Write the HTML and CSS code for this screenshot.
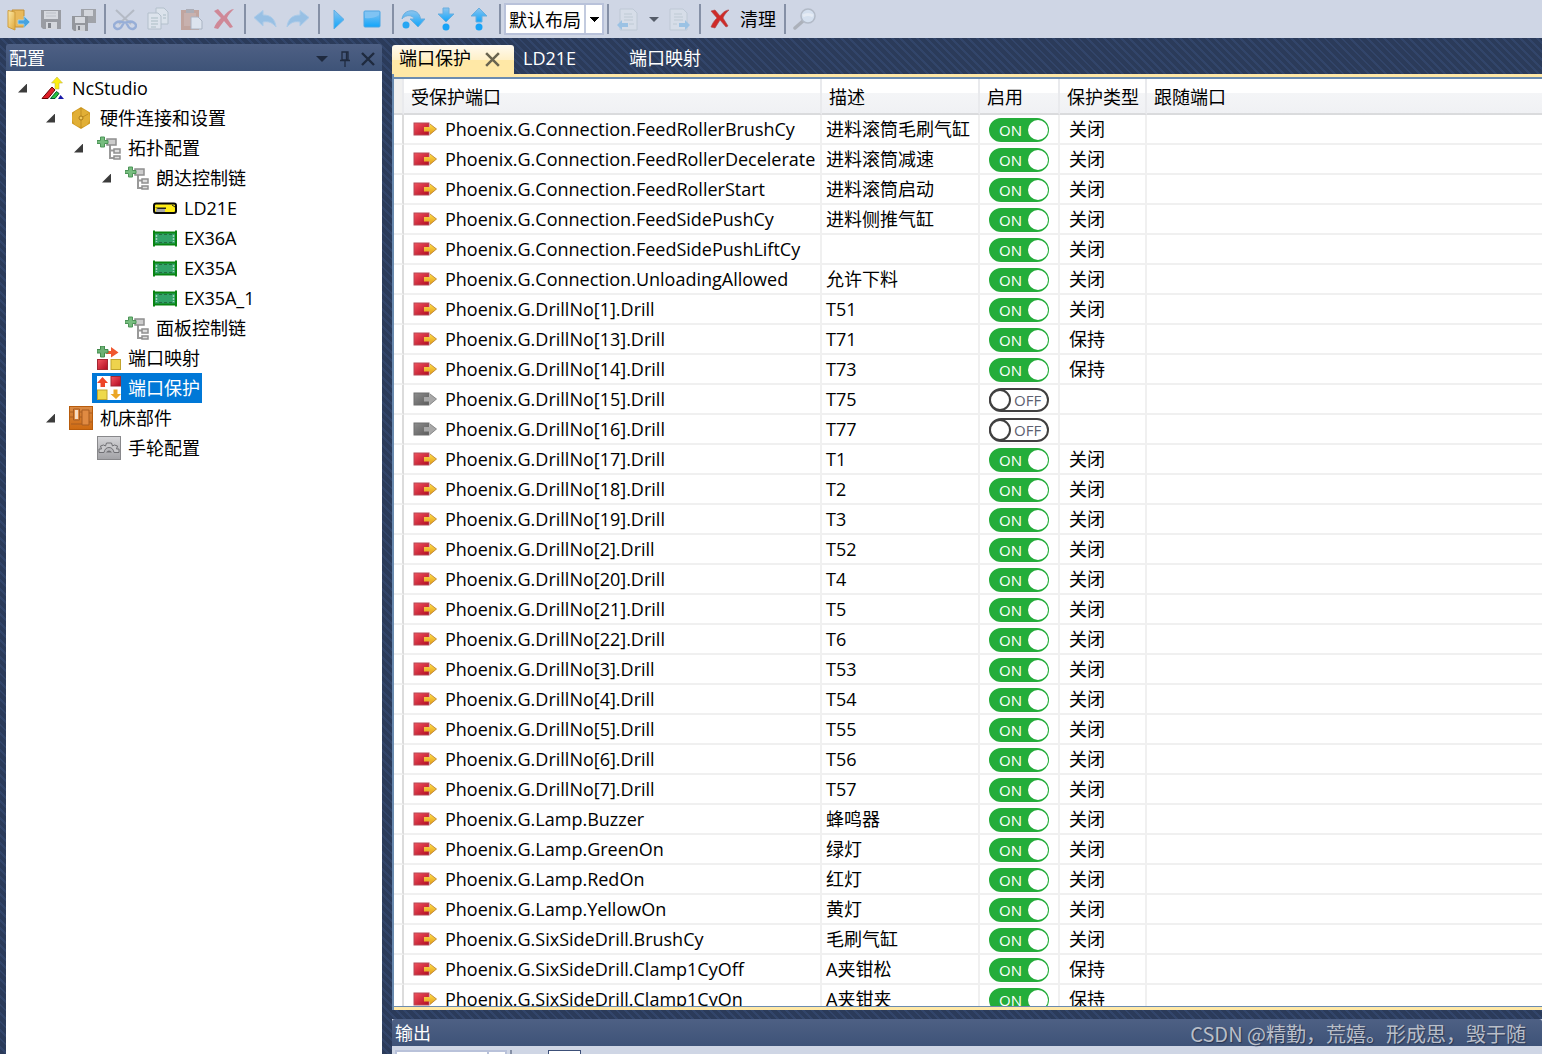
FILE: index.html
```html
<!DOCTYPE html>
<html lang="zh-CN">
<head>
<meta charset="utf-8">
<title>NcStudio</title>
<link rel="stylesheet" href="styles.css">
</head>
<body>
<svg class="defs" aria-hidden="true">
  <defs>
    <linearGradient id="gFolder" x1="0" y1="0" x2="1" y2="1"><stop offset="0" stop-color="#fdeaa8"/><stop offset="1" stop-color="#dfa83a"/></linearGradient>
    <linearGradient id="gBlue" x1="0" y1="0" x2="0" y2="1"><stop offset="0" stop-color="#8cc4ee"/><stop offset="1" stop-color="#0fa5fb"/></linearGradient>
    <linearGradient id="gRed" x1="0" y1="0" x2="1" y2="1"><stop offset="0" stop-color="#f4545f"/><stop offset="1" stop-color="#b00a20"/></linearGradient>
    <linearGradient id="gYellow" x1="0" y1="0" x2="0" y2="1"><stop offset="0" stop-color="#ffe04a"/><stop offset="1" stop-color="#e09a1a"/></linearGradient>
    <linearGradient id="gGray" x1="0" y1="0" x2="1" y2="1"><stop offset="0" stop-color="#8f8f8f"/><stop offset="1" stop-color="#5b5b5b"/></linearGradient>
    <linearGradient id="gSilver" x1="0" y1="0" x2="0" y2="1"><stop offset="0" stop-color="#d5d5d8"/><stop offset="1" stop-color="#a2a2a6"/></linearGradient>
    <linearGradient id="gOrange" x1="0" y1="0" x2="0" y2="1"><stop offset="0" stop-color="#d98a45"/><stop offset="1" stop-color="#cf6a10"/></linearGradient>
  </defs>
  <symbol id="i-open" viewBox="0 0 24 24"><path d="M6 3h12v17H9z" fill="#e9b95a" stroke="#c28f35"/><path d="M2 3.500L9 5v18l-7-3z" fill="url(#gFolder)" stroke="#cf9d3d"/><path d="M12 13h6V9l6 6-6 6v-4h-6z" fill="#46a3e0" stroke="#a9d7f2" stroke-width=".8"/></symbol>
  <symbol id="i-save" viewBox="0 0 24 24"><path d="M2 3h20v19H4l-2-2z" fill="#999ca3"/><path d="M5 4h14v8H5z" fill="#d6d9df"/><path d="M7 6h10M7 9h10" stroke="#bcc0c8"/><path d="M7 15h11v7H7z" fill="#d4d7dd"/><path d="M9 16h3v5H9z" fill="#80848c"/></symbol>
  <symbol id="i-saveall" viewBox="0 0 24 24"><path d="M9 2h15v14H9z" fill="#a0a3a9"/><path d="M12 3h9v6h-9z" fill="#d3d6dc"/><path d="M0 9h16v15H2l-2-2z" fill="#94979d"/><path d="M3 10h10v6H3z" fill="#d6d9df"/><path d="M4 18h9v6H4z" fill="#cdd0d6"/><path d="M6 19h2v4H6z" fill="#7c8088"/></symbol>
  <symbol id="i-cut" viewBox="0 0 24 24"><path d="M3 3l15 14M21 3L6 17" stroke="#a3a9b1" stroke-width="2"/><path d="M1 18.500c0-2 3-4 6-4l4 1-3 5c-3 3-7 1-7-2zM23 18.500c0-2-3-4-6-4l-4 1 3 5c3 3 7 1 7-2z" fill="none" stroke="#7395cf" stroke-width="2.400"/></symbol>
  <symbol id="i-copy" viewBox="0 0 24 24"><path d="M10 1h8l4 4v12H10z" fill="#e4eaf0" stroke="#a2b2bc"/><path d="M2 6h10l3 3v13H2z" fill="#e6ecf2" stroke="#a2b2bc"/><path d="M5 11h7M5 14h7M5 17h7M5 20h5M17 8h3M17 11h3" stroke="#93aeb0"/></symbol>
  <symbol id="i-paste" viewBox="0 0 24 24"><path d="M2 3h18v20H2z" fill="#b98672"/><path d="M5 6h12v13H5z" fill="#c4998a"/><path d="M7 2h8v4H7z" fill="#959297"/><path d="M12 10h7l4 4v8H12z" fill="#e6ecf4" stroke="#939dad"/></symbol>
  <symbol id="i-del" viewBox="0 0 24 24"><path d="M2 4l4-2 6 7c3-4 7-7 10-7-3 3-6 6-7 9l6 9-3 1-6-7-6 8-4-1c2-5 4-7 7-10z" fill="#cf5564"/></symbol>
  <symbol id="i-undo" viewBox="0 0 24 24"><path d="M1 10.500l9-7v4.500c8 0 12 4 13 12-4-5-8-6-13-5v4z" fill="#74b2e4" stroke="#93c4ec"/></symbol>
  <symbol id="i-redo" viewBox="0 0 24 24"><path d="M23 10.500l-9-7v4.500C6 8 2 12 1 20c4-5 8-6 13-5v4z" fill="#74b2e4" stroke="#93c4ec"/></symbol>
  <symbol id="i-play" viewBox="0 0 24 24"><path d="M7 3l10 9.500L7 22z" fill="url(#gBlue)" stroke="#5caee6"/></symbol>
  <symbol id="i-stop" viewBox="0 0 24 24"><rect x="4" y="4" width="16" height="16" rx="1" fill="url(#gBlue)" stroke="#4aa5e4"/><path d="M5 11q8 1 14-3V5H5z" fill="#7fc3f3"/></symbol>
  <symbol id="i-over" viewBox="0 0 24 24"><path d="M1 12C2 5 8 3 13 4c4 1 6 4 6.500 8H24l-7 8-8-8h4c-1-4-8-5-12 0z" fill="url(#gBlue)" stroke="#69aedf"/><circle cx="5" cy="18" r="3.500" fill="#27a6f3"/></symbol>
  <symbol id="i-into" viewBox="0 0 24 24"><path d="M9 1h6v6h5l-8 8-8-8h5z" fill="url(#gBlue)" stroke="#69aedf"/><circle cx="12" cy="20" r="3.500" fill="#18a3f7"/></symbol>
  <symbol id="i-out" viewBox="0 0 24 24"><path d="M9 15h6V9h5l-8-8-8 8h5z" fill="url(#gBlue)" stroke="#69aedf"/><circle cx="12" cy="20" r="3.500" fill="#18a3f7"/></symbol>
  <symbol id="i-prev" viewBox="0 0 24 24"><path d="M4 2h13l4 4v17H4z" fill="#dbe3ea" stroke="#b4c1cd"/><path d="M8 7h8M8 10h9M8 13h9M13 17h5" stroke="#b4c2ca"/><path d="M1 18l5-5v3h6v4H6v3z" fill="#7ab6e4"/></symbol>
  <symbol id="i-next" viewBox="0 0 24 24"><path d="M3 2h13l4 4v17H3z" fill="#dbe3ea" stroke="#b4c1cd"/><path d="M7 7h8M7 10h9M7 13h9M6 17h4" stroke="#b4c2ca"/><path d="M23 18l-5-5v3h-6v4h6v3z" fill="#7ab6e4"/></symbol>
  <symbol id="i-clear" viewBox="0 0 24 24"><path d="M3 4l4-1 5 6c3-4 6-6 9-6-3 3-5 5-6 8l5 8-2 1-6-7-5 8-4-1c2-5 4-7 6-9z" fill="#cf2a28" stroke="#a94444" stroke-width=".6"/></symbol>
  <symbol id="i-find" viewBox="0 0 24 24"><path d="M2 21l8-7" stroke="#96999f" stroke-width="3.500" stroke-linecap="round"/><circle cx="15" cy="9" r="7" fill="#d9e8f7" stroke="#a0a8b4" stroke-width="1.500"/><path d="M10 9q5-3 10 0" stroke="#f4f9fe" stroke-width="3" fill="none"/></symbol>

  <symbol id="t-nc" viewBox="0 0 24 24"><path d="M1 22.500L11 11l3 3-7 8.500z" fill="#e01f28" stroke="#600"/><path d="M9.500 22.500l6-7 2.500 2-4 5z" fill="#27c33c" stroke="#053"/><path d="M17 23l2.500-4 3.500 4z" fill="#1818a8"/><path d="M14 13V7h-3.500L16 1l5.500 6H18v6z" fill="#fbee12" stroke="#c4b74b" stroke-width=".6"/></symbol>
  <symbol id="t-hex" viewBox="0 0 24 24"><path d="M12 1l9 5.500v11L12 23l-9-5.500v-11z" fill="#cf9a22"/><circle cx="12" cy="12" r="9" fill="#e1af36"/><path d="M12 2v20M12 12l7-4" stroke="#c18f22"/><circle cx="12" cy="12" r="2" fill="#f0c95c" stroke="#a87816"/></symbol>
  <symbol id="t-topo" viewBox="0 0 24 24"><path d="M13 9v13h5M13 14.500h5" fill="none" stroke="#999" stroke-width="2"/><rect x="10" y="3" width="9" height="6" fill="#ccc" stroke="#8f8f8f" stroke-width="1.500"/><rect x="17" y="13" width="6" height="4" fill="#ddd" stroke="#8f8f8f" stroke-width="1.500"/><rect x="17" y="20" width="6" height="3" fill="#ddd" stroke="#8f8f8f" stroke-width="1.500"/><path d="M3.500 1h4v3.500H11v3H7.500V11h-4V7.500H0v-3h3.500z" fill="#76bd7e" stroke="#4d9458"/></symbol>
  <symbol id="t-ld" viewBox="0 0 24 24"><rect x="1" y="7.500" width="22" height="9.500" rx="2" fill="#ffee18" stroke="#080808" stroke-width="2"/><path d="M2 11.500h11v1.500H5z" fill="#222"/><path d="M3 13h9v3H3z" fill="#aaa"/><path d="M19 9l3 2" stroke="#222"/></symbol>
  <symbol id="t-ex" viewBox="0 0 24 24"><rect x="1" y="6.500" width="22" height="12" fill="#31a367" stroke="#098412" stroke-width="2"/><path d="M1 4.500v16M23 4.500v16" stroke="#098412" stroke-width="2"/><path d="M6 8.500h13M6 16.500h13" stroke="#246c42" stroke-dasharray="3 2"/><path d="M3.500 9v7M20.500 9v7" stroke="#a1d3b8" stroke-width="1.500" stroke-dasharray="2 1"/></symbol>
  <symbol id="t-map" viewBox="0 0 24 24"><rect x=".5" y="13.500" width="10" height="10" fill="url(#gRed)" stroke="#a22733"/><rect x="14" y="13.500" width="9.500" height="10" fill="#eed34c" stroke="#c2a42c"/><path d="M9 5h5V1l7.500 5.500-7.500 5V8H9z" fill="#f0572f"/><path d="M3.500 0h4v3.500H11v3.500H7.500v4h-4V7H0V3.500h3.500z" fill="#6cb174" stroke="#438b4d"/></symbol>
  <symbol id="t-guard" viewBox="0 0 24 24"><path d="M0 0h24v24H0z" fill="#fff"/><rect x="14" y=".5" width="9.500" height="9.500" fill="url(#gRed)" stroke="#a22733"/><rect x=".5" y="14" width="9.500" height="9.500" fill="#eed94c" stroke="#c2a42c"/><path d="M5.500 1l5.500 6H8v4H3.500V7H0z" fill="#ed4528"/><path d="M16.500 13.500h4v4.500h3.500l-5 5-5.500-5h3z" fill="#eba626"/></symbol>
  <symbol id="t-machine" viewBox="0 0 24 24"><rect x=".5" y=".5" width="23" height="23" fill="url(#gOrange)" stroke="#b85c0c"/><path d="M4.500 3h6v11h-6zM13 4h7v15h-7z" fill="#e08a42" stroke="#a85c20"/><path d="M6 4h3v9H6z" fill="#f6dcc4"/><path d="M1 6h3M1 11h3M10 6h3M10 11h3M20 7h3M20 16h3M2 18h11" stroke="#a85c20"/></symbol>
  <symbol id="t-wheel" viewBox="0 0 24 24"><rect x=".5" y=".5" width="23" height="23" fill="url(#gSilver)" stroke="#88888b"/><path d="M2 16.500h5q1-5 5-5t5 5h5V13h-2.500l1-3-3-1-2 1-1-3h-5l-1 3-2-1-3 1 1 3H2z" fill="#c8c8cb" stroke="#707074"/><path d="M9 16.500q3-4 6 0z" fill="#707074"/></symbol>

  <symbol id="p-on" viewBox="0 0 24 16"><rect x="1" y="2" width="15" height="12" fill="url(#gRed)" stroke="#b54a58"/><path d="M11 6h6V3l6.500 5-6.500 5.500V10.500h-6z" fill="url(#gYellow)"/><path d="M17 3l6.500 5L17 13.500" fill="none" stroke="#b97a2a" stroke-width=".8"/></symbol>
  <symbol id="p-off" viewBox="0 0 24 16"><rect x="1" y="2" width="15" height="12" fill="url(#gGray)" stroke="#6e6e6e"/><path d="M11 6h6V3l6.500 5-6.500 5.500V10.500h-6z" fill="#a8a8a8"/><path d="M17 3l6.500 5L17 13.500" fill="none" stroke="#777" stroke-width=".8"/></symbol>
  <symbol id="x" viewBox="0 0 16 16"><path d="M2 2l12 12M14 2L2 14" stroke="currentColor" stroke-width="2.400"/></symbol>
  <symbol id="pin" viewBox="0 0 16 16"><path d="M5 1h6v8H5zM3 9.500h10M8 10v6M9.500 1v8" fill="none" stroke="currentColor" stroke-width="1.300"/></symbol>
</svg>

<header class="toolbar">
  <button class="tool" aria-label="打开"><svg><use href="#i-open"/></svg></button>
  <button class="tool" aria-label="保存"><svg><use href="#i-save"/></svg></button>
  <button class="tool" aria-label="全部保存"><svg><use href="#i-saveall"/></svg></button>
  <span class="sep"></span>
  <button class="tool" disabled aria-label="剪切"><svg><use href="#i-cut"/></svg></button>
  <button class="tool" disabled aria-label="复制"><svg><use href="#i-copy"/></svg></button>
  <button class="tool" disabled aria-label="粘贴"><svg><use href="#i-paste"/></svg></button>
  <button class="tool" disabled aria-label="删除"><svg><use href="#i-del"/></svg></button>
  <span class="sep"></span>
  <button class="tool" disabled aria-label="撤销"><svg><use href="#i-undo"/></svg></button>
  <button class="tool" disabled aria-label="重做"><svg><use href="#i-redo"/></svg></button>
  <span class="sep"></span>
  <button class="tool" aria-label="运行"><svg><use href="#i-play"/></svg></button>
  <button class="tool" aria-label="停止"><svg><use href="#i-stop"/></svg></button>
  <span class="sep"></span>
  <button class="tool" aria-label="单步跳过"><svg><use href="#i-over"/></svg></button>
  <button class="tool" aria-label="单步进入"><svg><use href="#i-into"/></svg></button>
  <button class="tool" aria-label="单步跳出"><svg><use href="#i-out"/></svg></button>
  <span class="sep"></span>
  <select class="layout-select" aria-label="布局"><option>默认布局</option></select>
  <span class="sep"></span>
  <button class="tool" disabled aria-label="上一个"><svg><use href="#i-prev"/></svg></button>
  <button class="tool-drop" aria-label="历史"><span class="caret"></span></button>
  <button class="tool" disabled aria-label="下一个"><svg><use href="#i-next"/></svg></button>
  <span class="sep"></span>
  <button class="tool-text"><svg><use href="#i-clear"/></svg>清理</button>
  <span class="sep"></span>
  <button class="tool" disabled aria-label="查找"><svg><use href="#i-find"/></svg></button>
</header>

<main class="workspace">
  <aside class="sidebar">
    <div class="panel-head">
      <h2>配置</h2>
      <button class="head-btn" aria-label="菜单"><span class="caret"></span></button>
      <button class="head-btn" aria-label="固定"><svg><use href="#pin"/></svg></button>
      <button class="head-btn" aria-label="关闭"><svg><use href="#x"/></svg></button>
    </div>
    <ul class="tree">
      <li><div class="node open"><span class="item"><svg><use href="#t-nc"/></svg>NcStudio</span></div>
        <ul>
          <li><div class="node open"><span class="item"><svg><use href="#t-hex"/></svg>硬件连接和设置</span></div>
            <ul>
              <li><div class="node open"><span class="item"><svg><use href="#t-topo"/></svg>拓扑配置</span></div>
                <ul>
                  <li><div class="node open"><span class="item"><svg><use href="#t-topo"/></svg>朗达控制链</span></div>
                    <ul>
                      <li><div class="node"><span class="item"><svg><use href="#t-ld"/></svg>LD21E</span></div></li>
                      <li><div class="node"><span class="item"><svg><use href="#t-ex"/></svg>EX36A</span></div></li>
                      <li><div class="node"><span class="item"><svg><use href="#t-ex"/></svg>EX35A</span></div></li>
                      <li><div class="node"><span class="item"><svg><use href="#t-ex"/></svg>EX35A_1</span></div></li>
                    </ul>
                  </li>
                  <li><div class="node"><span class="item"><svg><use href="#t-topo"/></svg>面板控制链</span></div></li>
                </ul>
              </li>
              <li><div class="node"><span class="item"><svg><use href="#t-map"/></svg>端口映射</span></div></li>
              <li><div class="node"><span class="item selected"><svg><use href="#t-guard"/></svg>端口保护</span></div></li>
            </ul>
          </li>
          <li><div class="node open"><span class="item"><svg><use href="#t-machine"/></svg>机床部件</span></div>
            <ul>
              <li><div class="node"><span class="item"><svg><use href="#t-wheel"/></svg>手轮配置</span></div></li>
            </ul>
          </li>
        </ul>
      </li>
    </ul>
  </aside>

  <div class="content">
    <nav class="tabs">
      <button class="tab active">端口保护<svg><use href="#x"/></svg></button>
      <button class="tab">LD21E</button>
      <button class="tab">端口映射</button>
    </nav>
    <section class="document">
      <table class="grid">
        <colgroup><col class="c-head"><col class="c-port"><col class="c-desc"><col class="c-on"><col class="c-type"><col></colgroup>
        <thead><tr><th></th><th>受保护端口</th><th>描述</th><th>启用</th><th>保护类型</th><th>跟随端口</th></tr></thead>
        <tbody id="ports"></tbody>
      </table>
    </section>
    <section class="output">
      <div class="panel-head">
        <h2>输出</h2>
        <span class="watermark">CSDN @精勤，荒嬉。形成思，毁于随</span>
      </div>
      <div class="output-bar">
        <select aria-label="输出来源"></select>
        <span class="sep"></span>
        <button class="pressed" aria-label="筛选"></button>
      </div>
    </section>
  </div>
</main>
<script src="app.js"></script>
</body>
</html>
```
FILE: styles.css
```css
* { box-sizing: border-box; }

body {
  margin: 0;
  height: 100vh;
  display: flex;
  flex-direction: column;
  overflow: hidden;
  font: 18px/30px "Open Sans", "Noto Sans CJK SC", sans-serif;
  color: #000;
  background: repeating-linear-gradient(45deg, #2b3b5a 0 4px, #32456a 4px 6px);
}

button, select, input { font: inherit; color: inherit; margin: 0; }
button { border: 0; padding: 0; background: none; display: flex; align-items: center; justify-content: center; }
svg { flex: none; display: block; }
.defs { position: absolute; width: 0; height: 0; }

.toolbar {
  flex: none;
  height: 38px;
  padding-left: 2px;
  display: flex;
  align-items: center;
  background: #cfd6e5;
}
.toolbar svg { width: 24px; height: 24px; }
.tool { width: 33px; height: 38px; padding-right: 1px; }
.tool:disabled { opacity: .6; }
.tool-drop { width: 18px; height: 38px; color: #555c69; }
.tool-text { padding: 0 5px 0 4px; gap: 8px; }
.sep { flex: none; width: 2px; height: 30px; margin: 0 3px; background: #8590a6; }
.caret { border: 5px solid transparent; border-top-color: currentColor; border-bottom: 0; }

.layout-select {
  appearance: none;
  width: 100px;
  height: 32px;
  padding: 0 0 0 3px;
  border: 2px solid #b9c2da;
  border-radius: 0;
  background:
    linear-gradient(#000, #000) no-repeat right 3px top 12px / 9px 1px,
    linear-gradient(#000, #000) no-repeat right 4px top 13px / 7px 1px,
    linear-gradient(#000, #000) no-repeat right 5px top 14px / 5px 1px,
    linear-gradient(#000, #000) no-repeat right 6px top 15px / 3px 1px,
    linear-gradient(#000, #000) no-repeat right 7px top 16px / 1px 1px,
    linear-gradient(#c3cbdf, #c3cbdf) no-repeat right 16px top / 2px 100%,
    #fff;
}

.workspace { flex: 1; min-height: 0; display: flex; gap: 10px; padding: 6px 0 0 6px; }

.sidebar { flex: none; width: 376px; display: flex; flex-direction: column; }
.panel-head {
  flex: none;
  height: 27px;
  padding: 2px 3px 0;
  display: flex;
  align-items: center;
  border-radius: 3px 3px 0 0;
  background: linear-gradient(#4e6084, #3e5378);
  color: #1f2a3f;
}
.panel-head h2 { flex: 1; margin: 0; font-size: 18px; font-weight: 400; line-height: 25px; color: #fff; }
.head-btn { width: 23px; height: 25px; }
.head-btn svg { width: 16px; height: 16px; }
.head-btn .caret { border-width: 6px 6px 0; }

.tree { flex: 1; background: #fff; padding: 2px 0 0; }
.tree, .tree ul { margin: 0; list-style: none; }
.tree ul { padding: 0 0 0 28px; }
.node { display: flex; height: 30px; }
.node::before {
  content: "";
  align-self: center;
  width: 9px;
  height: 9px;
  margin: 0 9px 0 12px;
}
.node.open::before {
  background: #3c3c3c;
  clip-path: polygon(100% 0, 100% 100%, 0 100%);
}
.item { display: flex; align-items: center; gap: 7px; padding: 0 2px 0 5px; }
.item svg { width: 24px; height: 24px; }
.item.selected { background: #0078d7; color: #fff; }

.content { flex: 1; min-width: 0; display: flex; flex-direction: column; }
.tabs { flex: none; display: flex; height: 30px; padding-top: 1px; }
.tab { padding: 0 44px 3px 9px; color: #fff; line-height: 26px; }
.tab.active {
  gap: 13px;
  padding: 0 13px 3px 7px;
  color: #000;
  border-radius: 3px 3px 0 0;
  background: linear-gradient(#fffaf0, #fff0c8 50%, #ffe8a6 52%);
}
.tab svg { width: 17px; height: 17px; margin-top: 3px; color: #6a6450; }

.document {
  flex: 1;
  min-height: 0;
  overflow: hidden;
  background: #fff;
  border-left: 2px solid #6a8bb0;
  position: relative;
}
.document::before { content: ""; display: block; height: 5px; margin-left: -2px; background: linear-gradient(#ffe8a6 3px, #6a8bb0 3px); }
.document::after {
  content: "";
  position: absolute;
  inset: auto 0 0 -2px;
  height: 4px;
  background: linear-gradient(#6a8bb0 1px, #ffe8a6 1px);
}

.grid { width: 100%; table-layout: fixed; border-collapse: separate; border-spacing: 0; }
.c-head { width: 10px; }
.c-port { width: 418px; }
.c-desc { width: 158px; }
.c-on { width: 80px; }
.c-type { width: 87px; }
.grid th {
  height: 36px;
  padding: 2px 0 0 7px;
  text-align: left;
  font-weight: 400;
  line-height: 32px;
  white-space: nowrap;
  background: linear-gradient(#fff 40%, #f4f5f7 42%, #f0f1f4);
  border-right: 2px solid #e9eaed;
  border-bottom: 2px solid #dadbdd;
}
.grid th:first-child { padding: 0; background: #f0f0f0; }
.grid td {
  height: 30px;
  padding: 0 0 0 4px;
  line-height: 28px;
  white-space: nowrap;
  border-right: 2px solid #f0f0f0;
  border-bottom: 2px solid #f0f0f0;
}
.grid td:first-child { padding: 0; border-right-color: #dcdcdc; }
.grid td:nth-child(2), .grid td:nth-child(4), .grid td:nth-child(5) { padding-left: 9px; }
.grid th:last-child, .grid td:last-child { border-right: 0; }
.port { display: flex; align-items: center; gap: 8px; }
.port svg { width: 24px; height: 16px; }

.switch {
  display: flex;
  align-items: center;
  width: 60px;
  height: 24px;
  margin-top: 2px;
  border: 2px solid #404040;
  border-radius: 12px;
  font-size: 15px;
  line-height: 20px;
  color: #5c6070;
}
.switch input {
  appearance: none;
  flex: none;
  width: 22px;
  height: 22px;
  margin: 0 3px 0 -2px;
  border: 2px solid #404040;
  border-radius: 50%;
  background: #fff;
}
.switch.on {
  flex-direction: row-reverse;
  justify-content: flex-start;
  background: #24ad3a;
  border-color: #24ad3a;
  color: #fff;
}
.switch.on input { width: 20px; height: 20px; margin: 0 -1px 0 6px; border: 0; }

.output { flex: none; height: 35px; margin-top: 9px; overflow: hidden; background: #cfd6e5; }
.watermark { padding-right: 13px; font-family: "Noto Sans CJK SC", sans-serif; font-size: 20px; line-height: 25px; color: #b9bec8; text-shadow: 1px 1px 1px #2a3855; }
.output-bar { display: flex; align-items: flex-start; padding: 4px 0 0 3px; }
.output-bar select {
  appearance: none;
  width: 112px;
  height: 28px;
  border: 2px solid #b9c2da;
  border-radius: 0;
  background: linear-gradient(#b9c2da, #b9c2da) no-repeat right 16px top / 2px 100% #fff;
}
.pressed { width: 33px; height: 28px; margin-left: 33px; background: #fff; border: 1px solid #3c4f78; }
```
FILE: app.js
```javascript
const G = "Phoenix.G.";
const CLOSE = "关闭";
const HOLD = "保持";

// [port, description, protection type]; a port without a type is disabled
const ports = [
  ["Connection.FeedRollerBrushCy", "进料滚筒毛刷气缸", CLOSE],
  ["Connection.FeedRollerDecelerate", "进料滚筒减速", CLOSE],
  ["Connection.FeedRollerStart", "进料滚筒启动", CLOSE],
  ["Connection.FeedSidePushCy", "进料侧推气缸", CLOSE],
  ["Connection.FeedSidePushLiftCy", "", CLOSE],
  ["Connection.UnloadingAllowed", "允许下料", CLOSE],
  ["DrillNo[1].Drill", "T51", CLOSE],
  ["DrillNo[13].Drill", "T71", HOLD],
  ["DrillNo[14].Drill", "T73", HOLD],
  ["DrillNo[15].Drill", "T75", ""],
  ["DrillNo[16].Drill", "T77", ""],
  ["DrillNo[17].Drill", "T1", CLOSE],
  ["DrillNo[18].Drill", "T2", CLOSE],
  ["DrillNo[19].Drill", "T3", CLOSE],
  ["DrillNo[2].Drill", "T52", CLOSE],
  ["DrillNo[20].Drill", "T4", CLOSE],
  ["DrillNo[21].Drill", "T5", CLOSE],
  ["DrillNo[22].Drill", "T6", CLOSE],
  ["DrillNo[3].Drill", "T53", CLOSE],
  ["DrillNo[4].Drill", "T54", CLOSE],
  ["DrillNo[5].Drill", "T55", CLOSE],
  ["DrillNo[6].Drill", "T56", CLOSE],
  ["DrillNo[7].Drill", "T57", CLOSE],
  ["Lamp.Buzzer", "蜂鸣器", CLOSE],
  ["Lamp.GreenOn", "绿灯", CLOSE],
  ["Lamp.RedOn", "红灯", CLOSE],
  ["Lamp.YellowOn", "黄灯", CLOSE],
  ["SixSideDrill.BrushCy", "毛刷气缸", CLOSE],
  ["SixSideDrill.Clamp1CyOff", "A夹钳松", HOLD],
  ["SixSideDrill.Clamp1CyOn", "A夹钳夹", HOLD],
];

document.getElementById("ports").innerHTML = ports.map(([name, desc, type]) => {
  const on = type !== "";
  return `<tr>
    <td></td>
    <td><div class="port"><svg><use href="#${on ? "p-on" : "p-off"}"/></svg>${G}${name}</div></td>
    <td>${desc}</td>
    <td><label class="switch${on ? " on" : ""}"><input type="checkbox"${on ? " checked" : ""}>${on ? "ON" : "OFF"}</label></td>
    <td>${type}</td>
    <td></td>
  </tr>`;
}).join("");
```
